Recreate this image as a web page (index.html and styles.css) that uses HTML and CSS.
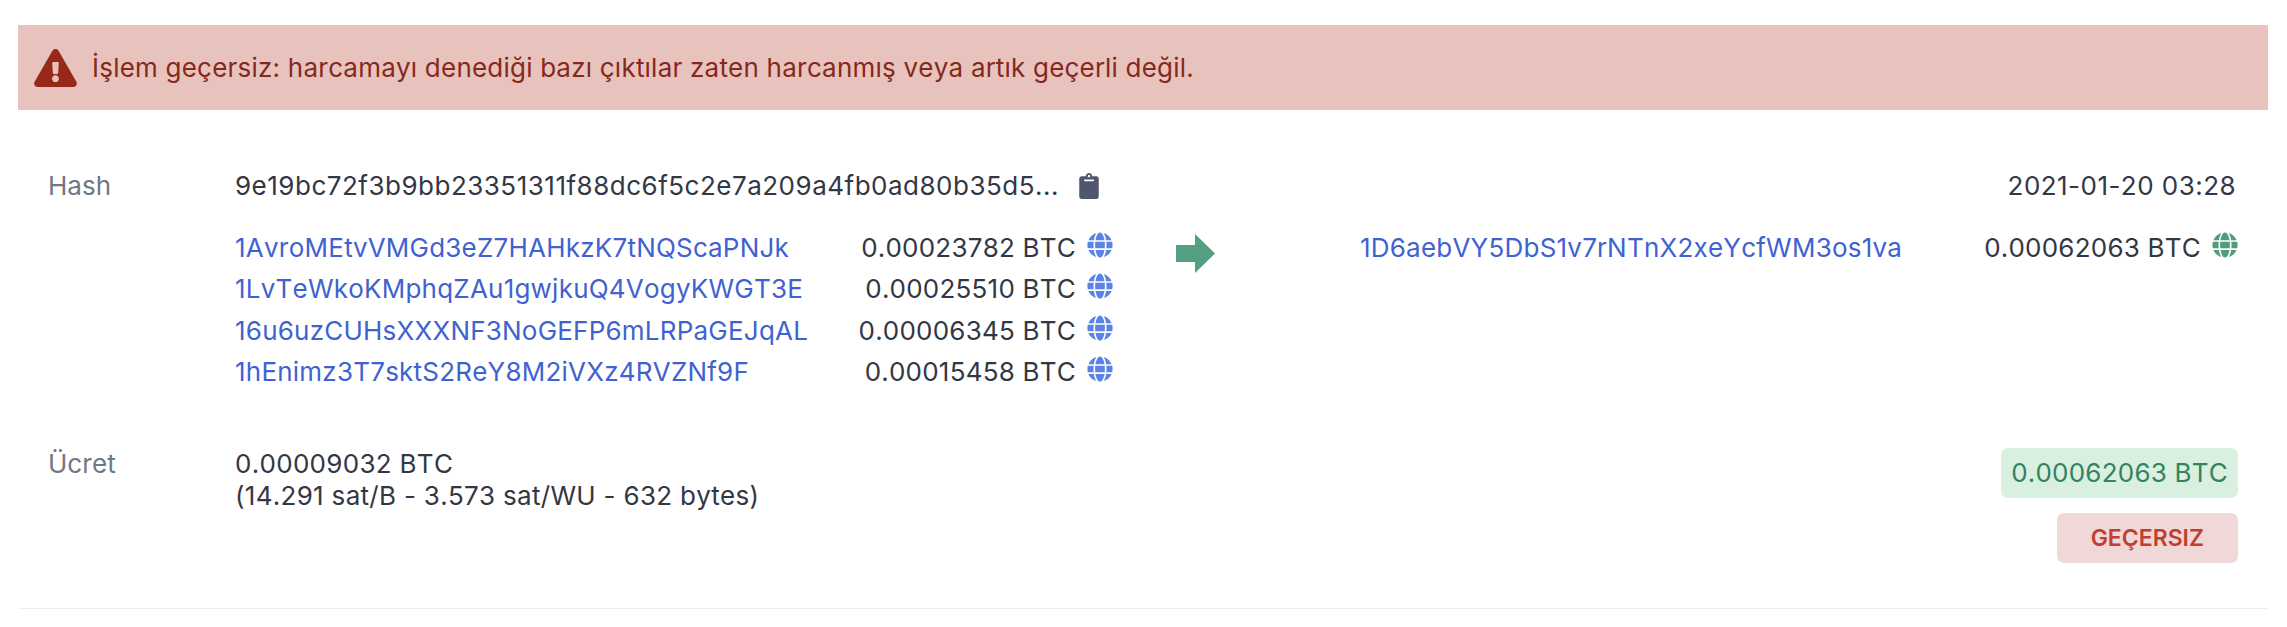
FILE: index.html
```html
<!DOCTYPE html>
<html lang="tr">
<head>
  <meta charset="UTF-8">
  <title>Hash</title>
  <link rel="stylesheet" href="styles.css">
</head>
<body>
  <div class="alert">
    <svg class="alert-icon" viewBox="0 0 576 512"><path d="M569.517 440.013C587.975 472.007 564.806 512 527.94 512H48.054c-36.937 0-59.999-40.055-41.577-71.987L246.423 24.015c18.467-32.009 64.72-31.951 83.154 0l239.94 416zM288 354c-25.405 0-46 20.595-46 46s20.595 46 46 46 46-20.595 46-46-20.595-46-46-46zm-43.673-165.346l7.418 136c.347 6.364 5.609 11.346 11.982 11.346h48.546c6.373 0 11.635-4.982 11.982-11.346l7.418-136c.375-6.874-5.098-12.654-11.982-12.654h-63.383c-6.884 0-12.356 5.78-11.981 12.654z"/></svg>
    <span>İşlem geçersiz: harcamayı denediği bazı çıktılar zaten harcanmış veya artık geçerli değil.</span>
  </div>

  <div class="tx">
    <div class="tx-row">
      <div class="label">Hash</div>
      <div class="hash">
        <span>9e19bc72f3b9bb23351311f88dc6f5c2e7a209a4fb0ad80b35d5...</span>
        <svg class="clip" viewBox="0 0 384 512"><path d="M384 112v352c0 26.51-21.49 48-48 48H48c-26.51 0-48-21.49-48-48V112c0-26.51 21.49-48 48-48h80c0-35.29 28.71-64 64-64s64 28.71 64 64h80c26.51 0 48 21.49 48 48zM192 40c-13.255 0-24 10.745-24 24s10.745 24 24 24 24-10.745 24-24-10.745-24-24-24m96 114v-20a6 6 0 0 0-6-6H102a6 6 0 0 0-6 6v20a6 6 0 0 0 6 6h180a6 6 0 0 0 6-6z"/></svg>
      </div>
      <div class="date">2021-01-20 03:28</div>
    </div>

    <div class="io">
      <div class="inputs">
        <div class="addr"><a href="#">1AvroMEtvVMGd3eZ7HAHkzK7tNQScaPNJk</a><span class="amount">0.00023782 BTC</span><svg class="globe" viewBox="0 0 496 512"><use href="#globe"/></svg></div>
        <div class="addr"><a href="#">1LvTeWkoKMphqZAu1gwjkuQ4VogyKWGT3E</a><span class="amount">0.00025510 BTC</span><svg class="globe" viewBox="0 0 496 512"><use href="#globe"/></svg></div>
        <div class="addr"><a href="#">16u6uzCUHsXXXNF3NoGEFP6mLRPaGEJqAL</a><span class="amount">0.00006345 BTC</span><svg class="globe" viewBox="0 0 496 512"><use href="#globe"/></svg></div>
        <div class="addr"><a href="#">1hEnimz3T7sktS2ReY8M2iVXz4RVZNf9F</a><span class="amount">0.00015458 BTC</span><svg class="globe" viewBox="0 0 496 512"><use href="#globe"/></svg></div>
      </div>
      <div class="arrow">
        <svg viewBox="0 0 39 39"><path d="M0 11h19V0l20 19.5L19 39V28H0z"/></svg>
      </div>
      <div class="outputs">
        <div class="addr"><a href="#">1D6aebVY5DbS1v7rNTnX2xeYcfWM3os1va</a><span class="amount">0.00062063 BTC</span><svg class="globe green" viewBox="0 0 496 512"><use href="#globe"/></svg></div>
      </div>
    </div>

    <div class="tx-row fee-row">
      <div class="label">Ücret</div>
      <div class="fee">
        0.00009032 BTC<br>
        (14.291 sat/B - 3.573 sat/WU - 632 bytes)
      </div>
      <div class="badges">
        <span class="badge total">0.00062063 BTC</span>
        <span class="badge invalid">GEÇERSIZ</span>
      </div>
    </div>
  </div>

  <svg class="defs" width="0" height="0">
    <defs>
      <path id="globe" d="M336.5 160C322 70.7 287.8 8 248 8s-74 62.7-88.5 152h177zM152 256c0 22.2 1.2 43.5 3.3 64h185.3c2.1-20.5 3.3-41.8 3.3-64s-1.2-43.5-3.3-64H155.3c-2.1 20.5-3.3 41.8-3.3 64zm324.7-96c-28.6-67.9-86.5-120.4-158-141.6 24.4 33.8 41.2 84.7 50 141.6h108zM177.2 18.4C105.8 39.6 47.8 92.1 19.3 160h108c8.7-56.9 25.5-107.8 49.9-141.6zM487.4 192H372.7c2.1 21 3.3 42.5 3.3 64s-1.2 43-3.3 64h114.6c5.5-20.5 8.6-41.8 8.6-64s-3.1-43.5-8.5-64zM120 256c0-21.5 1.2-43 3.3-64H8.6C3.2 212.5 0 233.8 0 256s3.2 43.5 8.6 64h114.6c-2-21-3.2-42.5-3.2-64zm39.5 96c14.5 89.3 48.7 152 88.5 152s74-62.7 88.5-152h-177zm159.3 141.6c71.4-21.2 129.4-73.7 158-141.6h-108c-8.8 56.9-25.6 107.8-50 141.6zM19.3 352c28.6 67.9 86.5 120.4 158 141.6-24.4-33.8-41.2-84.7-50-141.6h-108z"/>
    </defs>
  </svg>
</body>
</html>
```

FILE: styles.css
```css
* { box-sizing: border-box; }
body {
  margin: 0;
  padding: 25px 19px 0 18px;
  font-family: Inter, "Liberation Sans", sans-serif;
  font-size: 26px;
  line-height: 32px;
  font-kerning: none;
  letter-spacing: 0.22px;
  color: #333745;
  background: #fff;
}

.alert {
  display: flex;
  align-items: center;
  gap: 15px;
  height: 85px;
  padding: 0 18px 0 16px;
  background: #e8c3be;
  color: #85291d;
}

.alert-icon {
  width: 43px;
  height: 38px;
  fill: #97291a;
}

.tx {
  padding: 60px 30px 0;
  height: 499px;
  border-bottom: 1px solid #eceeef;
}

.tx-row {
  display: flex;
}

.label {
  width: 187px;
  color: #6f7785;
  letter-spacing: 0;
}

.hash {
  flex: 1;
  display: flex;
  align-items: center;
  gap: 20px;
  letter-spacing: 0.5px;
}

.clip {
  width: 20px;
  height: 26px;
  fill: #50566e;
}

.date {
  margin-right: 2px;
  letter-spacing: 0.46px;
}

.io {
  display: flex;
  margin-top: 25px;
  margin-left: 187px;
}

.inputs {
  width: 878px;
}

.addr {
  display: flex;
  align-items: center;
  height: 41.5px;
}

.addr a {
  color: #3f62d1;
  text-decoration: none;
}

.amount {
  margin-left: auto;
}

.globe {
  width: 26px;
  height: 26px;
  margin-left: 11px;
  margin-top: -6px;
  fill: #5b83e6;
}

.globe.green {
  fill: #4f9d7b;
}

.arrow {
  width: 247px;
  padding: 7px 0 0 63px;
}

.arrow svg {
  display: block;
  width: 39px;
  height: 39px;
  fill: #52a07f;
}

.outputs {
  flex: 1;
}

.fee-row {
  margin-top: 55px;
}

.fee {
  flex: 1;
  letter-spacing: 0.3px;
}

.badges {
  display: flex;
  flex-direction: column;
  align-items: flex-end;
  gap: 15px;
}

.badge {
  display: block;
  height: 50px;
  line-height: 50px;
  border-radius: 7px;
}

.badge.total {
  padding: 0 10px;
  background: #d9efe0;
  color: #33835f;
}

.badge.invalid {
  padding: 0 34px;
  background: #f0d8d8;
  color: #c23f30;
  font-weight: 600;
  font-size: 23px;
  letter-spacing: 0;
}

.defs {
  position: absolute;
}
```
